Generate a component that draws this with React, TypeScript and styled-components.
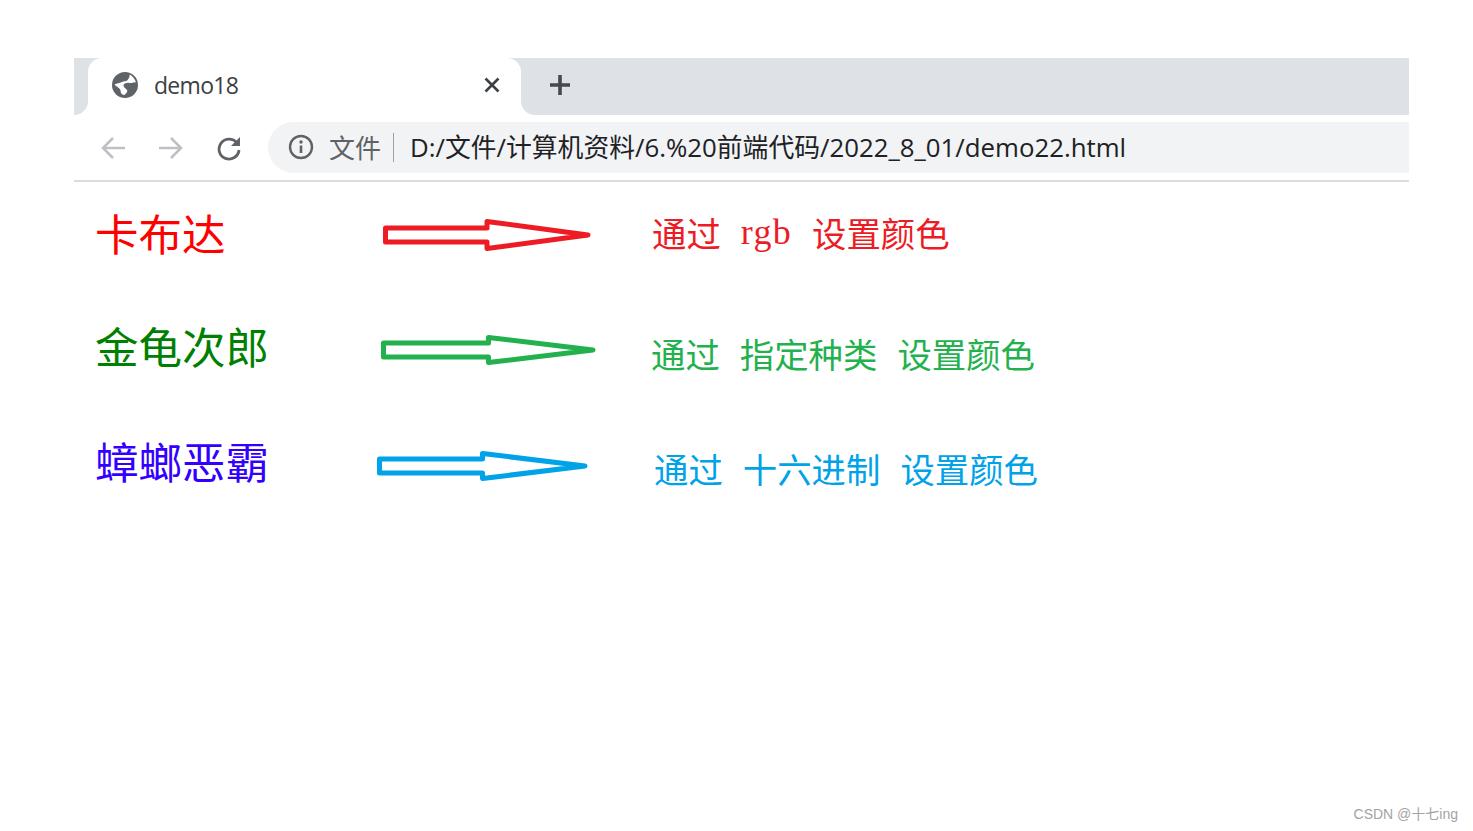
import styled, { createGlobalStyle } from "styled-components";
import { FC } from "react";

const cjk = `"Noto Sans CJK SC", sans-serif`;

const GlobalStyle = createGlobalStyle`
  html, body {
    margin: 0;
    background: #fff;
  }
`;

interface ArrowProps {
  color: string;
  width: number;
  height: number;
  top: number;
}

// hand drawn hollow arrow, the shaft joins the head at about 50% of the width
const Arrow: FC<ArrowProps> = ({ color, width, height, top }) => {
  const mid = height / 2;
  const neck = width * 0.5;
  return (
    <ArrowSvg $top={top} width={width} height={height} viewBox={`0 0 ${width} ${height}`}>
      <path
        d={`M2.5 ${mid - 7} H${neck} V2.5 L${width - 3} ${mid} L${neck} ${height - 2.5} V${mid + 7} H2.5 Z`}
        fill="none"
        stroke={color}
        strokeWidth="5"
        strokeLinejoin="round"
      />
    </ArrowSvg>
  );
};

const rows = [
  {
    name: "卡布达",
    nameColor: "#ff0000",
    nameTop: -4,
    arrowAt: 288,
    arrow: { color: "#ed1c24", width: 208, height: 32, top: 0 },
    note: ["通过", "rgb", "设置颜色"],
    noteColor: "#ed1c24",
    noteAt: 557,
    noteTop: -6,
  },
  {
    name: "金龟次郎",
    nameColor: "#008000",
    nameTop: -8,
    arrowAt: 286,
    arrow: { color: "#22b14c", width: 215, height: 30, top: 0 },
    note: ["通过", "指定种类", "设置颜色"],
    noteColor: "#22b14c",
    noteAt: 556,
    noteTop: 7,
  },
  {
    name: "蟑螂恶霸",
    nameColor: "#3300ff",
    nameTop: -8,
    arrowAt: 282,
    arrow: { color: "#00a2e8", width: 211, height: 30, top: 2 },
    note: ["通过", "十六进制", "设置颜色"],
    noteColor: "#00a2e8",
    noteAt: 559,
    noteTop: 7,
  },
];

const App: FC = () => (
  <>
    <GlobalStyle />
    <Page>
      <Browser>
        <TabStrip>
          <TabEdge />
          <Tab>
            <svg viewBox="0 0 26 26" width="26" height="26">
              <circle cx="13" cy="13" r="13" fill="#5f6368" />
              <path
                d="M17.5 2.6 C20.5 4 23 7 24 10.5 C21.5 9.5 20 11.5 17.5 11 C14.5 10.5 11.5 11.5 11.5 13.5 C11.5 15.5 14 16.5 15 18 C16 19.5 14.5 21 12.5 23 C10 23 8.5 21 8.5 18.5 C8.5 16.5 5 15 2.5 12.5 C4.5 11 8 11.5 10 10 C12 9 15 9.5 16 7.5 C17 6 18 4.5 17.5 2.6 Z"
                fill="#fff"
              />
            </svg>
            <TabTitle>demo18</TabTitle>
            <CloseIcon viewBox="0 0 16 16" width="16" height="16">
              <path d="M1.5 1.5 L14.5 14.5 M14.5 1.5 L1.5 14.5" stroke="#3c4043" strokeWidth="2.6" />
            </CloseIcon>
          </Tab>
          <NewTab>
            <svg viewBox="0 0 22 22" width="22" height="22">
              <path d="M11 1 V21 M1 11 H21" stroke="#45484c" strokeWidth="3.6" />
            </svg>
          </NewTab>
        </TabStrip>
        <Toolbar>
          <NavIcons>
            <svg viewBox="0 0 26 24" width="26" height="24">
              <path d="M25 12 H3 M13 2 L3 12 L13 22" fill="none" stroke="#bdc1c6" strokeWidth="2.6" />
            </svg>
            <svg viewBox="0 0 26 24" width="26" height="24">
              <path d="M1 12 H23 M13 2 L23 12 L13 22" fill="none" stroke="#bdc1c6" strokeWidth="2.6" />
            </svg>
            <svg viewBox="0 0 26 26" width="26" height="26">
              <path d="M21 8 A10 10 0 1 0 23 15" fill="none" stroke="#5f6368" strokeWidth="2.8" />
              <path d="M24 2 V11 H15 Z" fill="#5f6368" />
            </svg>
          </NavIcons>
          <Omnibox>
            <svg viewBox="0 0 26 26" width="26" height="26">
              <circle cx="13" cy="13" r="11" fill="none" stroke="#5f6368" strokeWidth="2.4" />
              <path d="M13 11.5 V19" stroke="#5f6368" strokeWidth="2.6" />
              <circle cx="13" cy="8" r="1.7" fill="#5f6368" />
            </svg>
            <Scheme>文件</Scheme>
            <Divider />
            <Url>D:/文件/计算机资料/6.%20前端代码/2022_8_01/demo22.html</Url>
          </Omnibox>
        </Toolbar>
        <Rows>
          {rows.map((row) => (
            <Row key={row.name} $arrowAt={row.arrowAt} $noteAt={row.noteAt}>
              <Name $color={row.nameColor} $top={row.nameTop}>
                {row.name}
              </Name>
              <Arrow {...row.arrow} />
              <Note $color={row.noteColor} $top={row.noteTop}>
                {row.note.map((part) => (
                  <NotePart key={part} $latin={part === "rgb"}>
                    {part}
                  </NotePart>
                ))}
              </Note>
            </Row>
          ))}
        </Rows>
      </Browser>
      <Watermark>CSDN @十七ing</Watermark>
    </Page>
  </>
);

export default App;

// styled components

const Page = styled.div`
  position: relative;
  width: 1473px;
  height: 831px;
  padding: 58px 64px 0 74px;
  box-sizing: border-box;
  overflow: hidden;
  background: #fff;
`;

const Browser = styled.div`
  display: flex;
  flex-direction: column;
`;

// grey behind the tab's top corners, white behind the neighbours' bottom corners
const TabStrip = styled.div`
  display: flex;
  height: 57px;
  background: linear-gradient(#dee1e6 50%, #fff 50%);
`;

const TabEdge = styled.div`
  width: 14px;
  background: #dee1e6;
  border-bottom-right-radius: 14px;
`;

const Tab = styled.div`
  display: flex;
  align-items: center;
  width: 433px;
  padding: 0 21px 4px 24px;
  box-sizing: border-box;
  background: #fff;
  border-radius: 14px 14px 0 0;
`;

const TabTitle = styled.span`
  margin-left: 16px;
  font: 23px "Open Sans", ${cjk};
  letter-spacing: -0.7px;
  color: #3c4043;
`;

const CloseIcon = styled.svg`
  margin-left: auto;
`;

const NewTab = styled.div`
  display: flex;
  align-items: center;
  flex: 1;
  padding: 0 0 4px 28px;
  background: #dee1e6;
  border-bottom-left-radius: 14px;
`;

const Toolbar = styled.div`
  display: flex;
  align-items: center;
  height: 65px;
  border-bottom: 2px solid #dadce0;
`;

const NavIcons = styled.div`
  display: flex;
  align-items: center;
  gap: 32px;
  width: 194px;
  padding-left: 26px;
  box-sizing: border-box;
`;

const Omnibox = styled.div`
  display: flex;
  align-items: center;
  flex: 1;
  height: 51px;
  margin-bottom: 1px;
  padding-left: 20px;
  background: #f1f3f4;
  border-radius: 26px 0 0 26px;
`;

const Scheme = styled.span`
  margin: 0 0 2px 15px;
  font: 26px ${cjk};
  color: #5f6368;
`;

const Divider = styled.div`
  width: 1px;
  height: 29px;
  margin: 0 16px 0 12px;
  background: #9aa0a6;
`;

const Url = styled.span`
  margin-bottom: 3px;
  font: 25.8px "Open Sans", ${cjk};
  color: #202124;
  white-space: nowrap;
`;

const Rows = styled.div`
  display: flex;
  flex-direction: column;
  margin-top: -5px;
`;

const Row = styled.div<{ $arrowAt: number; $noteAt: number }>`
  display: grid;
  grid-template-columns: ${(p) => p.$arrowAt}px ${(p) => p.$noteAt - p.$arrowAt}px 1fr;
  align-items: center;
  height: 115px;
  padding-left: 21px;
`;

const Name = styled.div<{ $color: string; $top: number }>`
  margin-top: ${(p) => p.$top}px;
  white-space: nowrap;
  font: 43.5px ${cjk};
  line-height: 60px;
  color: ${(p) => p.$color};
`;

const ArrowSvg = styled.svg<{ $top: number }>`
  margin-top: ${(p) => p.$top}px;
`;

const Note = styled.div<{ $color: string; $top: number }>`
  margin-top: ${(p) => p.$top}px;
  display: flex;
  gap: 20px;
  font: 34.4px ${cjk};
  line-height: 48px;
  color: ${(p) => p.$color};
`;

const NotePart = styled.span<{ $latin: boolean }>`
  font-family: ${(p) => (p.$latin ? `"Liberation Serif", serif` : cjk)};
  font-size: ${(p) => (p.$latin ? "36px" : "inherit")};
  letter-spacing: ${(p) => (p.$latin ? "1.3px" : "0")};
`;

const Watermark = styled.div`
  position: absolute;
  right: 15px;
  bottom: 8px;
  font: 14px "Liberation Sans", ${cjk};
  color: #a3a3a3;
`;
